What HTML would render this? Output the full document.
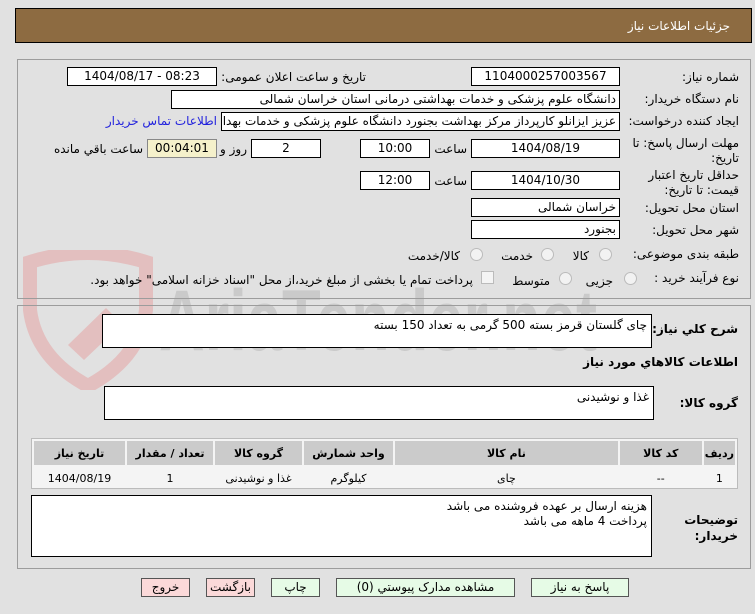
<!DOCTYPE html>
<html><head><meta charset="utf-8"><style>
body{margin:0;width:755px;height:614px;background:#e1e1e1;font-family:Tahoma,"DejaVu Sans","Liberation Sans",sans-serif;font-size:12px;color:#000;position:relative;overflow:hidden}
.a{position:absolute}
.f{position:absolute;background:#fff;border:1px solid #000;box-sizing:border-box;height:19px;line-height:17px;text-align:center;font-size:12px;white-space:nowrap;overflow:hidden}
.r{text-align:right;padding-right:3px}
.l{position:absolute;white-space:nowrap;direction:rtl;text-align:right;font-size:12px}
.ta{position:absolute;background:#fff;border:1px solid #000;box-sizing:border-box;direction:rtl;padding:3px 4px;font-size:12px}
.rad{position:absolute;width:11px;height:11px;border-radius:50%;border:1px solid #bbb;background:#f2f2f2}
.btn{position:absolute;top:578px;height:19px;border:1px solid #555;box-sizing:border-box;text-align:center;line-height:17px;font-size:12px;background:#e6fbe6}
.pk{background:#fbd9d9}
table{border-collapse:separate;border-spacing:2px;font-size:11px}
td{text-align:center;height:21px}
th{background:#cbcbcb;height:22px;font-weight:bold}
</style></head><body>
<div class="a" style="left:15px;top:8px;width:737px;height:35px;background:#8d6b41;border:1px solid #000;box-sizing:border-box"></div>
<div class="l" style="right:25px;top:19px;color:#fff;font-size:12px">جزئیات اطلاعات نیاز</div>
<svg class="a" style="left:18px;top:250px" width="600" height="140"><path d="M12 12 Q70 -6 128 12 L128 60 Q122 108 70 136 Q18 108 12 60Z" fill="none" stroke="#e3b3b3" stroke-width="14" opacity=".75"/><path d="M50 95 L88 58 L104 74 L66 110Z" fill="#e3b3b3" opacity=".75"/>
<text x="141" y="100" font-family="Liberation Sans" font-size="86" font-weight="bold" fill="#c6c6c6" opacity=".85" textLength="438" lengthAdjust="spacingAndGlyphs">AriaTender.net</text></svg>
<div class="a" style="left:17px;top:59px;width:734px;height:240px;border:1px solid #9c9c9c;box-sizing:border-box"></div>
<div class="a" style="left:17px;top:305px;width:734px;height:264px;border:1px solid #9c9c9c;box-sizing:border-box"></div>
<div class="l" style="right:16px;top:70px">شماره نیاز:</div>
<div class="f" style="left:471px;top:67px;width:149px">1104000257003567</div>
<div class="l" style="right:389px;top:70px">تاریخ و ساعت اعلان عمومی:</div>
<div class="f" style="left:67px;top:67px;width:150px">1404/08/17 - 08:23</div>
<div class="l" style="right:16px;top:92px">نام دستگاه خریدار:</div>
<div class="f r" style="left:171px;top:90px;width:449px;direction:rtl">دانشگاه علوم پزشکی و خدمات بهداشتی درمانی استان خراسان شمالی</div>
<div class="l" style="right:16px;top:114px">ایجاد کننده درخواست:</div>
<div class="f r" style="left:221px;top:112px;width:399px;direction:rtl">عزیز ایزانلو کارپرداز مرکز بهداشت بجنورد دانشگاه علوم پزشکی و خدمات بهداشتی</div>
<div class="l" style="right:538px;top:114px;color:#2222dd">اطلاعات تماس خریدار</div>
<div class="l" style="right:16px;top:136px;line-height:15px">مهلت ارسال پاسخ: تا<br>تاریخ:</div>
<div class="f" style="left:471px;top:139px;width:149px">1404/08/19</div>
<div class="l" style="right:288px;top:142px">ساعت</div>
<div class="f" style="left:360px;top:139px;width:70px">10:00</div>
<div class="f" style="left:251px;top:139px;width:70px">2</div>
<div class="l" style="right:508px;top:142px">روز و</div>
<div class="f" style="left:147px;top:139px;width:70px;background:#f5f1cb;border-color:#888">00:04:01</div>
<div class="l" style="right:612px;top:142px">ساعت باقي مانده</div>
<div class="l" style="right:16px;top:168px;line-height:15px">حداقل تاریخ اعتبار<br>قیمت: تا تاریخ:</div>
<div class="f" style="left:471px;top:171px;width:149px">1404/10/30</div>
<div class="l" style="right:288px;top:174px">ساعت</div>
<div class="f" style="left:360px;top:171px;width:70px">12:00</div>
<div class="l" style="right:16px;top:201px">استان محل تحویل:</div>
<div class="f r" style="left:471px;top:198px;width:149px;direction:rtl">خراسان شمالی</div>
<div class="l" style="right:16px;top:223px">شهر محل تحویل:</div>
<div class="f r" style="left:471px;top:220px;width:149px;direction:rtl">بجنورد</div>
<div class="l" style="right:16px;top:247px">طبقه بندی موضوعی:</div>
<div class="rad" style="left:599px;top:248px"></div><div class="l" style="right:166px;top:249px">کالا</div>
<div class="rad" style="left:541px;top:248px"></div><div class="l" style="right:222px;top:249px">خدمت</div>
<div class="rad" style="left:470px;top:248px"></div><div class="l" style="right:295px;top:249px">کالا/خدمت</div>
<div class="l" style="right:16px;top:271px">نوع فرآیند خرید :</div>
<div class="rad" style="left:624px;top:272px"></div><div class="l" style="right:142px;top:274px">جزیی</div>
<div class="rad" style="left:559px;top:272px"></div><div class="l" style="right:205px;top:274px">متوسط</div>
<div class="a" style="left:481px;top:271px;width:11px;height:11px;border:1px solid #bbb;background:#f4f4f4"></div>
<div class="l" style="right:282px;top:273px">پرداخت تمام یا بخشی از مبلغ خرید،از محل "اسناد خزانه اسلامی" خواهد بود.</div>
<div class="l" style="right:17px;top:322px;font-weight:bold">شرح کلي نیاز:</div>
<div class="ta" style="left:102px;top:314px;width:550px;height:34px">چای گلستان قرمز بسته 500 گرمی به تعداد 150 بسته</div>
<div class="l" style="right:17px;top:355px;font-weight:bold">اطلاعات کالاهاي مورد نیاز</div>
<div class="l" style="right:17px;top:396px;font-weight:bold">گروه کالا:</div>
<div class="ta" style="left:104px;top:386px;width:550px;height:34px">غذا و نوشیدنی</div>
<div class="a" style="left:31px;top:438px;width:707px;height:51px;border:1px solid #bbb;box-sizing:border-box;background:#f4f4f4">
<table dir="rtl" style="width:705px"><tr><th style="width:24px">ردیف</th><th style="width:80px">کد کالا</th><th>نام کالا</th><th style="width:87px">واحد شمارش</th><th style="width:85px">گروه کالا</th><th style="width:84px">تعداد / مقدار</th><th style="width:89px">تاریخ نیاز</th></tr>
<tr><td>1</td><td>--</td><td>چای</td><td>کیلوگرم</td><td>غذا و نوشیدنی</td><td>1</td><td>1404/08/19</td></tr></table></div>
<div class="l" style="right:17px;top:512px;font-weight:bold;line-height:16px">توضیحات<br>خریدار:</div>
<div class="ta" style="left:31px;top:495px;width:621px;height:62px;line-height:15px">هزینه ارسال بر عهده فروشنده می باشد<br>پرداخت 4 ماهه می باشد</div>
<div class="btn" style="left:531px;width:98px">پاسخ به نیاز</div>
<div class="btn" style="left:336px;width:179px">مشاهده مدارک پیوستي (0)</div>
<div class="btn" style="left:271px;width:49px">چاپ</div>
<div class="btn pk" style="left:206px;width:49px">بازگشت</div>
<div class="btn pk" style="left:141px;width:49px">خروج</div>
</body></html>
